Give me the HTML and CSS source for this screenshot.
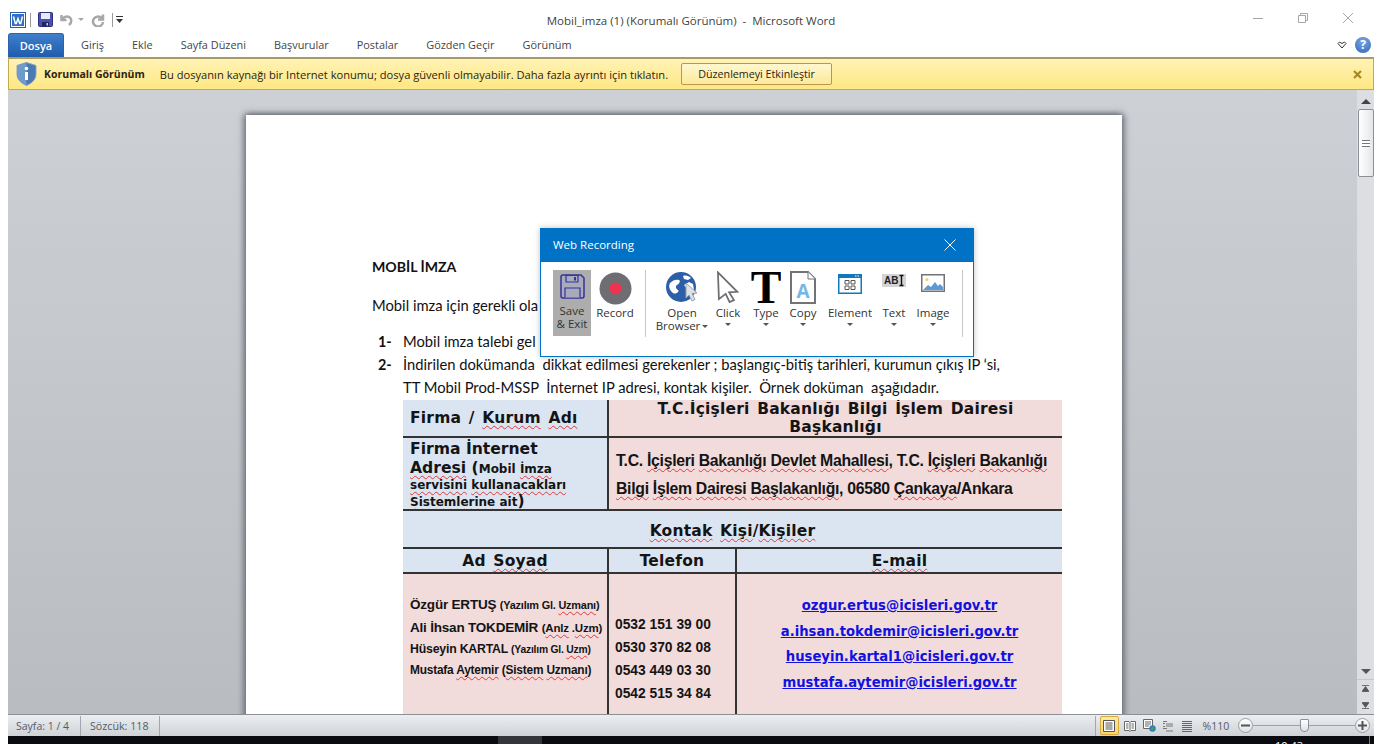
FILE: index.html
```html
<!DOCTYPE html>
<html lang="tr">
<head>
    <meta charset="utf-8">
    <title>Mobil_imza (1) (Korumalı Görünüm) - Microsoft Word</title>
    <link rel="stylesheet" href="styles.css">
</head>
<body>
    <div class="window">
        <div class="titlebar">
            <div class="qat">
                <svg class="qat-word" width="16" height="16" viewBox="0 0 16 16"><rect x="0.5" y="0.5" width="15" height="15" fill="#fff" stroke="#2a5ba8"/><rect x="2" y="2" width="12" height="12" fill="#2f6fc4"/><path d="M3.5 4.5l1.8 7h1l1.7-5 1.7 5h1l1.8-7" fill="none" stroke="#fff" stroke-width="1.5"/></svg>
                <span class="qat-sep"></span>
                <svg class="qat-save" width="15" height="15" viewBox="0 0 15 15"><rect x="0.5" y="0.5" width="14" height="14" rx="1" fill="#4b4fb0" stroke="#2e2f7c"/><rect x="3" y="1" width="9" height="6" fill="#e6ecf7"/><rect x="4" y="10" width="7" height="4.5" fill="#23245f"/><rect x="8.5" y="11" width="1.5" height="2.5" fill="#c9cde8"/></svg>
                <svg class="qat-undo" width="14" height="14" viewBox="0 0 14 14"><path d="M1.5 2v5h5M2 6.5C4 4 6.500 3 9 4c3 1.500 3 5.500 0 8" fill="none" stroke="#a6a8ab" stroke-width="2.500"/></svg>
                <span class="qat-caret"></span>
                <svg class="qat-redo" width="14" height="14" viewBox="0 0 14 14"><path d="M12 1.500v5H7M11 5.500A5 5 0 1 0 12 9" fill="none" stroke="#a6a8ab" stroke-width="2.500"/></svg>
                <span class="qat-sep qat-sep-last"></span>
                <svg class="qat-more" width="8" height="8" viewBox="0 0 8 8"><rect x="0" y="0" width="7" height="1" fill="#333"/><path d="M0 3h7L3.500 7z" fill="#333"/></svg>
            </div>
            <div class="title">Mobil_imza (1) (Korumalı Görünüm)&nbsp; -&nbsp; Microsoft Word</div>
            <div class="winctrl">
                <svg width="10" height="10" viewBox="0 0 10 10"><path d="M0 5.500h10" stroke="#a5a5a5"/></svg>
                <svg width="10" height="10" viewBox="0 0 10 10"><path d="M2.500 2.500V.5h7v7h-2M.5 2.500h7v7h-7z" fill="none" stroke="#a5a5a5"/></svg>
                <svg width="10" height="10" viewBox="0 0 10 10"><path d="M0 0l10 10M10 0L0 10" stroke="#a5a5a5"/></svg>
            </div>
        </div>

        <div class="tabs">
            <div class="tab-file">Dosya</div>
            <div class="tab-list">
                <span>Giriş</span>
                <span>Ekle</span>
                <span>Sayfa Düzeni</span>
                <span>Başvurular</span>
                <span>Postalar</span>
                <span>Gözden Geçir</span>
                <span>Görünüm</span>
            </div>
            <div class="tab-tools">
                <svg width="10" height="8" viewBox="0 0 10 8"><path d="M1 2.500L2.500 1 5 2.500 7.500 1 9 2.500 5 7z" fill="#fff" stroke="#333"/></svg>
                <span class="help">?</span>
            </div>
        </div>

        <div class="msgbar">
            <svg class="shield" width="21" height="24" viewBox="0 0 21 24"><path d="M10.500 0.500L20 3.500V12c0 5.500-4 9-9.500 11.500C5 21 1 17.500 1 12V3.500z" fill="#4a79b4" stroke="#86a2c4"/><path d="M10.500 0.500V23.500C5 21 1 17.500 1 12V3.500z" fill="#6f9bcc"/><circle cx="10.500" cy="6.500" r="1.800" fill="#fff"/><rect x="9" y="10" width="3" height="8" fill="#fff"/></svg>
            <strong class="msg-head">Korumalı Görünüm</strong>
            <span class="msg-text">Bu dosyanın kaynağı bir Internet konumu; dosya güvenli olmayabilir. Daha fazla ayrıntı için tıklatın.</span>
            <button class="msg-btn">Düzenlemeyi Etkinleştir</button>
            <svg class="msg-close" width="9" height="9" viewBox="0 0 9 9"><path d="M1 1l7 7M8 1L1 8" stroke="#a58a24" stroke-width="2.200"/></svg>
        </div>

        <div class="workspace">
            <div class="docpane">
                <div class="page">
                    <p class="doc-title">MOBİL İMZA</p>
                    <p class="doc-intro">Mobil imza için gerekli ola</p>
                    <ol class="doc-list">
                        <li><b>1-</b><span>Mobil imza talebi gel</span></li>
                        <li><b>2-</b><span>İndirilen dokümanda&nbsp; dikkat edilmesi gerekenler ; başlangıç-bitiş tarihleri, kurumun çıkış IP ‘si,</span></li>
                        <li><b></b><span>TT Mobil Prod-MSSP&nbsp; İnternet IP adresi, kontak kişiler.&nbsp; Örnek doküman&nbsp; aşağıdadır.</span></li>
                    </ol>
                    <table class="form">
                        <colgroup><col class="col-a"><col class="col-b"><col class="col-c"></colgroup>
                        <tr class="row-1">
                            <td class="blue head-left">Firma / <u>Kurum</u> <u>Adı</u></td>
                            <td class="pink head-center" colspan="2">T.C.İçişleri Bakanlığı Bilgi İşlem Dairesi<br>Başkanlığı</td>
                        </tr>
                        <tr class="row-2">
                            <td class="blue firm">
                                <div class="firm-big">Firma İnternet</div>
                                <div class="firm-big"><u>Adresi</u> (<small class="firm-small">Mobil <u>İmza</u></small></div>
                                <div class="firm-small"><u>servisini</u> <u>kullanacakları</u></div>
                                <div class="firm-small"><u>Sistemlerine</u> <u>ait</u><span class="firm-paren">)</span></div>
                            </td>
                            <td class="pink address" colspan="2">
                                <div>T.C. <u>İçişleri</u> <u>Bakanlığı</u> <u>Devlet</u> <u>Mahallesi</u>, T.C. <u>İçişleri</u> <u>Bakanlığı</u></div>
                                <div><u>Bilgi</u> <u>İşlem</u> <u>Dairesi</u> <u>Başlakanlığı</u>, 06580 <u>Çankaya</u>/Ankara</div>
                            </td>
                        </tr>
                        <tr class="row-3">
                            <td class="blue head-center" colspan="3"><u>Kontak</u> <u>Kişi</u>/<u>Kişiler</u></td>
                        </tr>
                        <tr class="row-4">
                            <td class="blue head-center">Ad <u>Soyad</u></td>
                            <td class="blue head-center">Telefon</td>
                            <td class="blue head-center"><u>E-mail</u></td>
                        </tr>
                        <tr class="row-5">
                            <td class="pink people">
                                <div class="p1">Özgür ERTUŞ <small>(Yazılım Gl. <u>Uzmanı</u>)</small></div>
                                <div class="p2">Ali İhsan TOKDEMİR <small>(<u>Anlz</u> .<u>Uzm</u>)</small></div>
                                <div class="p3">Hüseyin KARTAL <small>(Yazılım Gl. <u>Uzm</u>)</small></div>
                                <div class="p4">Mustafa <u>Aytemir</u> (<u>Sistem</u> <u>Uzmanı</u>)</div>
                            </td>
                            <td class="pink phones">
                                <div>0532 151 39 00</div>
                                <div>0530 370 82 08</div>
                                <div>0543 449 03 30</div>
                                <div>0542 515 34 84</div>
                            </td>
                            <td class="pink mails">
                                <div><a>ozgur.ertus@icisleri.gov.tr</a></div>
                                <div><a>a.ihsan.tokdemir@icisleri.gov.tr</a></div>
                                <div><a>huseyin.kartal1@icisleri.gov.tr</a></div>
                                <div><a>mustafa.aytemir@icisleri.gov.tr</a></div>
                            </td>
                        </tr>
                    </table>
                </div>
            </div>
            <div class="scroll">
                <div class="sb-arrow sb-up"></div>
                <div class="sb-thumb"><span></span></div>
                <div class="sb-track"></div>
                <div class="sb-arrow sb-down"></div>
                <div class="sb-nav">
                    <svg width="7" height="7" viewBox="0 0 7 7"><path d="M0 .5h7M3.500 1.500L7 6.500H0z" stroke="#555" stroke-width=".8" fill="#555"/></svg>
                </div>
                <div class="sb-nav sb-nav-last">
                    <svg width="7" height="7" viewBox="0 0 7 7"><path d="M0 6.500h7M3.500 5.500L7 .5H0z" stroke="#555" stroke-width=".8" fill="#555"/></svg>
                </div>
            </div>
        </div>

        <div class="statusbar">
            <span class="st-cell st-page">Sayfa: 1 / 4</span>
            <span class="st-cell st-words">Sözcük: 118</span>
            <div class="st-right">
                <div class="view view-on">
                    <svg width="12" height="12" viewBox="0 0 12 12"><path d="M.5.5h11v11H.5zM2.500 3h7M2.500 5h7M2.500 7h7M2.500 9h7" fill="#fff" stroke="#555"/></svg>
                </div>
                <div class="view">
                    <svg width="12" height="12" viewBox="0 0 12 12"><path d="M.5 1.500h4.500l1 1 1-1h4.500v9H7l-1 1-1-1H.5zM6 2.500v8M2 4h2.500M2 6h2.500M2 8h2.500M7.500 4H10M7.500 6H10M7.500 8H10" fill="#fff" stroke="#666"/></svg>
                </div>
                <div class="view">
                    <svg width="13" height="13" viewBox="0 0 13 13"><path d="M.5.5h9v9h-9zM2 3h6M2 5h6M2 7h4" fill="#fff" stroke="#666"/><circle cx="9.500" cy="9.500" r="3.200" fill="#2f7fb8"/><path d="M8 9.500l2-2 1 2-2 2z" fill="#5aa052"/></svg>
                </div>
                <div class="view">
                    <svg width="12" height="12" viewBox="0 0 12 12"><path d="M1 1.500h4M4 4h7M4 6h7M1 8.500h4M4 11h7M1 3.500h2M1 6.500h2" fill="none" stroke="#777"/></svg>
                </div>
                <div class="view">
                    <svg width="12" height="12" viewBox="0 0 12 12"><path d="M1 1.500h10M1 3.500h10M1 5.500h10M1 7.500h10M1 9.500h10M1 11.500h10" stroke="#666"/></svg>
                </div>
                <span class="zoom-val">%110</span>
                <span class="zoom-btn">
                    <svg width="9" height="9" viewBox="0 0 9 9"><path d="M0 4.500h9" stroke="#555" stroke-width="2"/></svg>
                </span>
                <div class="zoom-track"><span class="zoom-thumb"></span></div>
                <span class="zoom-btn">
                    <svg width="9" height="9" viewBox="0 0 9 9"><path d="M0 4.500h9M4.500 0v9" stroke="#555" stroke-width="2"/></svg>
                </span>
            </div>
        </div>

        <div class="taskbar">
            <span class="task-btn"></span>
            <span class="task-clock">10:43</span>
            <span class="task-line"></span>
        </div>
    </div>

    <div class="recorder">
        <div class="rec-head">
            <span>Web Recording</span>
            <svg width="12" height="12" viewBox="0 0 12 12"><path d="M.5.5l11 11M11.500.5l-11 11" stroke="#fff"/></svg>
        </div>
        <div class="rec-tools">
            <div class="tool tool-save">
                <svg width="25" height="25" viewBox="0 0 25 25"><path d="M1 3a2 2 0 0 1 2-2h18l3 3v18a2 2 0 0 1-2 2H3a2 2 0 0 1-2-2z" fill="#a9aabb" stroke="#34349a" stroke-width="1.500"/><path d="M6 1.500h12v6.500H6z" fill="#a9aabb" stroke="#34349a" stroke-width="1.200"/><path d="M14 3h2v3.500h-2z" fill="#34349a"/><path d="M5 23.500V14h15v9.500" fill="#a9aabb" stroke="#34349a" stroke-width="1.200"/></svg>
                <span>Save<br>&amp; Exit</span>
            </div>
            <div class="tool tool-record">
                <svg width="33" height="33" viewBox="0 0 33 33"><circle cx="16.500" cy="16.500" r="16" fill="#6d6d72"/><circle cx="16.500" cy="16.500" r="6" fill="#ee3350"/></svg>
                <span>Record</span>
            </div>
            <span class="rec-sep"></span>
            <div class="tool tool-browser">
                <svg width="34" height="33" viewBox="0 0 34 33"><circle cx="16" cy="16" r="15" fill="#2d5ea8"/><path d="M5 12c3-3 6-4 9-3 2 1 0 4-2 5s-1 4 1 5-2 5-5 3-5-7-3-10zM18 5c3-1 6 0 8 2l-3 2-4-1zM19 14l5-3 4 2 1 6-4 1-3-2z" fill="#fff"/><path d="M21 12l11 10-5 .5 3 6-3 1.500-3-6-3 3z" fill="#dfe3e8" stroke="#9aa0a8"/></svg>
                <span>Open<br>Browser<i class="caret caret-inline"></i></span>
            </div>
            <div class="tool tool-click">
                <svg width="24" height="33" viewBox="0 0 24 33"><path d="M2 2l20 20-8.500.5 5 8-4.500 2-4-8.500-7 5.500z" transform="translate(0 -.5) scale(.97)" fill="#fff" stroke="#6d6d72" stroke-width="1.800"/></svg>
                <span>Click</span>
                <i class="caret"></i>
            </div>
            <div class="tool tool-type">
                <svg width="30" height="33" viewBox="0 0 30 33"><text x="15" y="32" text-anchor="middle" class="type-t">T</text></svg>
                <span>Type</span>
                <i class="caret"></i>
            </div>
            <div class="tool tool-copy">
                <svg width="26" height="33" viewBox="0 0 26 33"><path d="M1 1h17l7 7v24H1z" fill="#fff" stroke="#737373" stroke-width="2"/><path d="M18 1v7h7" fill="#fff" stroke="#737373"/><text x="13" y="27" text-anchor="middle" class="copy-a">A</text></svg>
                <span>Copy</span>
                <i class="caret"></i>
            </div>
            <div class="tool tool-element">
                <svg width="24" height="33" viewBox="0 0 24 33"><rect x="0" y="3" width="24" height="20" fill="#1277bb"/><rect x="1.500" y="7" width="21" height="14.500" fill="#fff"/><path d="M17 5h1.500M19.500 5H21" stroke="#fff"/><path d="M7 9.500h4v3.500H7zM13 9.500h4v3.500h-4zM7 15h4v3.500H7zM13 15h4v3.500h-4z" fill="none" stroke="#555"/></svg>
                <span>Element</span>
                <i class="caret"></i>
            </div>
            <div class="tool tool-text">
                <svg width="24" height="33" viewBox="0 0 24 33"><rect x="0" y="3" width="24" height="13" fill="#d4d4d4"/><text x="2" y="13" class="abi">AB</text><path d="M17.500 4.500h4M17.500 14.500h4M19.500 4.500v10" stroke="#111" stroke-width="1.400"/></svg>
                <span>Text</span>
                <i class="caret"></i>
            </div>
            <div class="tool tool-image">
                <svg width="24" height="33" viewBox="0 0 24 33"><rect x=".75" y="3.750" width="22.500" height="16.500" fill="#fff" stroke="#737373" stroke-width="1.500"/><circle cx="6" cy="8.500" r="1.500" fill="#f0cf6a"/><path d="M2 19l5-5 3 2 4-5 3 4 2-2 3 3v3z" fill="#5b9bd5"/></svg>
                <span>Image</span>
                <i class="caret"></i>
            </div>
            <span class="rec-sep rec-sep-last"></span>
        </div>
    </div>
</body>
</html>
```
FILE: styles.css
```css
* {
    box-sizing: border-box;
}
html, body {
    height: 100%;
    margin: 0;
    overflow: hidden;
}
body {
    background-color: #fff;
    font-family: "Open Sans", "Noto Sans", sans-serif;
    color: #3b3b3b;
}
.window {
    display: flex;
    flex-direction: column;
    height: 744px;
    margin: 0 8px;
}

/* title bar */
.titlebar {
    display: flex;
    align-items: center;
    height: 32px;
    flex: none;
}
.qat {
    display: flex;
    align-items: center;
    width: 400px;
    padding: 7px 0 0 2px;
}
.qat-sep {
    width: 1px;
    height: 14px;
    margin: 0 7px 0 4px;
    background-color: #9a9a9a;
}
.qat-undo {
    margin-left: 7px;
}
.qat-caret {
    width: 0;
    height: 0;
    margin: 0 7px 0 4px;
    border-left: 3px solid transparent;
    border-right: 3px solid transparent;
    border-top: 3px solid #a6a8ab;
}
.qat-sep-last {
    margin: 0 3px 0 7px;
}
.title {
    width: 566px;
    padding-top: 8px;
    font-size: 11.5px;
    text-align: center;
    color: #3f3f3f;
}
.winctrl {
    display: flex;
    gap: 35px;
    margin-left: 279px;
    padding-top: 3px;
}

/* tabs */
.tabs {
    display: flex;
    align-items: center;
    height: 25px;
    flex: none;
    font-size: 10.900px;
    color: #444;
}
.tab-file {
    width: 56px;
    height: 24px;
    margin-top: 1px;
    border: 1px solid #2a62ad;
    border-bottom: none;
    border-radius: 3px 3px 0 0;
    background: linear-gradient(#3f7fcb, #1f5cae);
    color: #fff;
    font-size: 11px;
    font-weight: 600;
    line-height: 23px;
    text-align: center;
}
.tab-list {
    display: flex;
    gap: 28px;
    margin-left: 17px;
}
.tab-tools {
    display: flex;
    align-items: center;
    gap: 8px;
    margin-left: auto;
    margin-right: 3px;
}
.help {
    width: 16px;
    height: 16px;
    border-radius: 50%;
    background: radial-gradient(circle at 50% 30%, #7ca6e0, #2f66b8);
    color: #fff;
    font-size: 12px;
    font-weight: 700;
    line-height: 16px;
    text-align: center;
}

/* protected view bar */
.msgbar {
    display: flex;
    align-items: center;
    height: 33px;
    flex: none;
    border: 1px solid #c3ab4c;
    border-top: 2px solid #a89a66;
    background: linear-gradient(#fff3b5, #fee784);
    font-size: 11.130px;
    color: #2b2411;
}
.shield {
    margin-left: 7px;
}
.msg-head {
    margin-left: 7px;
    font-size: 10.500px;
    font-weight: 700;
}
.msg-text {
    margin-left: 15px;
}
.msg-btn {
    width: 151px;
    height: 22px;
    margin-left: 13px;
    padding: 0;
    border: 1px solid #b49a4a;
    border-radius: 2px;
    background: linear-gradient(#fff7d0, #fde99a);
    font-family: inherit;
    font-size: 10.700px;
    color: #2b2411;
}
.msg-close {
    margin-left: auto;
    margin-right: 11px;
}

/* document area */
.workspace {
    display: flex;
    flex: 1;
    min-height: 0;
    background: linear-gradient(#cdd0d5, #b9bcc0);
}
.docpane {
    flex: 1;
    min-width: 0;
    overflow: hidden;
    padding: 25px 0 0 238px;
}
.page {
    width: 876px;
    height: 900px;
    padding: 143px 60px 0 126px;
    background-color: #fff;
    box-shadow: 0 -2px 5px rgba(90, 95, 105, 0.55), 3px 0 6px rgba(90, 95, 105, 0.6), -3px 0 6px rgba(90, 95, 105, 0.6);
    font-family: "Lato", "Open Sans", sans-serif;
    font-size: 14.750px;
    color: #111;
}
.doc-title {
    margin: 0;
    font-size: 14.100px;
    font-weight: 700;
    line-height: 18px;
}
.doc-intro {
    margin: 20px 0 0;
    line-height: 18px;
}
.doc-list {
    margin: 16px 0 1px;
    padding: 0;
    list-style: none;
}
.doc-list li {
    display: flex;
    height: 23px;
    line-height: 23px;
}
.doc-list b {
    width: 31px;
    padding-left: 6px;
    font-size: 14.400px;
}
.form {
    width: 659px;
    margin: 0 0 0 31px;
    border-collapse: collapse;
    table-layout: fixed;
    font-family: "DejaVu Sans", sans-serif;
    font-weight: 700;
    color: #141414;
}
.form u {
    text-decoration: underline wavy #e0393e 1px;
    text-underline-offset: 2px;
    text-decoration-skip-ink: none;
}
.col-a {
    width: 205px;
}
.col-b {
    width: 128px;
}
.col-c {
    width: 326px;
}
.form td {
    padding: 0;
    border-top: 2px solid #333;
    border-left: 2px solid #333;
    overflow: hidden;
}
.form td:first-child {
    border-left: none;
}
.row-1 td {
    border-top: none;
}
.blue {
    background-color: #dbe5f1;
}
.pink {
    background-color: #f2dbdb;
}
.row-1 {
    height: 37px;
}
.row-2 {
    height: 73px;
}
.row-3 {
    height: 38px;
}
.row-3 td {
    padding-top: 3px;
}
.row-4 {
    height: 25px;
}
.row-4 td {
    padding-top: 1px;
}
.row-5 {
    height: 141px;
}
.head-left {
    padding-left: 7px !important;
    font-size: 15.500px;
    letter-spacing: 0.200px;
    word-spacing: 2px;
}
.head-center {
    font-size: 15.500px;
    letter-spacing: 0.200px;
    word-spacing: 2px;
    line-height: 18px;
    text-align: center;
}
.firm {
    padding: 2px 0 0 7px !important;
    vertical-align: top;
}
.firm-big {
    height: 19px;
    font-size: 15.600px;
    line-height: 19px;
}
.firm-small {
    height: 15.500px;
    font-size: 12px;
    line-height: 15.500px;
    font-weight: 700;
}
.firm-big .firm-small {
    height: auto;
}
.firm-paren {
    font-size: 15.600px;
    line-height: 14px;
}
.address {
    padding: 2px 0 0 7px !important;
    font-family: "Liberation Sans", sans-serif;
    font-size: 15.800px;
    letter-spacing: -0.300px;
    line-height: 28px;
}
.people {
    padding-left: 7px !important;
    padding-top: 20px !important;
    vertical-align: top;
    font-family: "Liberation Sans", sans-serif;
    letter-spacing: -0.200px;
}
.people div {
    height: 21px;
    line-height: 22px;
}
.p1, .p2 {
    font-size: 13.500px;
}
.p1 {
    height: 23px !important;
}
.p1 small {
    font-size: 10.900px;
}
.p2 small {
    font-size: 11.500px;
}
.p3 {
    font-size: 12.300px;
}
.p3 small {
    font-size: 10.300px;
}
.p4 {
    font-size: 11.900px;
}
.phones {
    padding: 39px 0 0 6px !important;
    vertical-align: top;
    font-family: "Liberation Sans", sans-serif;
    font-size: 13.800px;
}
.phones div {
    height: 23px;
    line-height: 23px;
}
.mails {
    padding-top: 19px !important;
    vertical-align: top;
    font-size: 13.200px;
    text-align: center;
}
.mails div {
    height: 25.500px;
    line-height: 25.500px;
}
.mails a {
    color: #1212e0;
    text-decoration: underline;
}

/* scrollbar */
.scroll {
    display: flex;
    flex-direction: column;
    align-items: center;
    width: 17px;
    flex: none;
    background-color: #dcdee2;
}
.sb-arrow {
    width: 0;
    height: 0;
    flex: none;
    border-left: 5px solid transparent;
    border-right: 5px solid transparent;
}
.sb-up {
    margin: 9px 0 5px;
    border-bottom: 5px solid #444;
}
.sb-down {
    margin: 0 0 5px;
    border-top: 5px solid #555;
}
.sb-thumb {
    display: flex;
    align-items: center;
    justify-content: center;
    width: 16px;
    height: 68px;
    flex: none;
    border: 1px solid #8c9096;
    border-radius: 2px;
    background: linear-gradient(90deg, #fff, #e4e6ea);
}
.sb-thumb span {
    width: 8px;
    height: 7px;
    border-top: 1px solid #777;
    border-bottom: 1px solid #777;
    background: linear-gradient(#fff 2px, #777 2px, #777 3px, #fff 3px);
}
.sb-track {
    flex: 1;
}
.sb-nav {
    display: flex;
    align-items: center;
    justify-content: center;
    width: 17px;
    height: 17px;
    flex: none;
    border-top: 1px solid #c6c8cc;
}
.sb-nav-last {
    border-top: none;
    height: 18px;
}

/* status bar */
.statusbar {
    display: flex;
    align-items: center;
    height: 22px;
    flex: none;
    border-top: 1px solid #8d9196;
    background: linear-gradient(#eceef1, #cfd2d6);
    font-size: 10.500px;
    color: #555b66;
}
.st-cell {
    display: flex;
    align-items: center;
    height: 20px;
    border-right: 1px solid #a3a6ab;
}
.st-page {
    width: 73px;
    padding-left: 8px;
}
.st-words {
    width: 79px;
    padding-left: 9px;
    font-size: 10.700px;
}
.st-right {
    display: flex;
    align-items: center;
    height: 20px;
    margin-left: auto;
    padding: 0 4px;
    border-left: 1px solid #a3a6ab;
}
.view {
    display: flex;
    align-items: center;
    justify-content: center;
    width: 19px;
    height: 19px;
}
.view-on {
    margin-right: 2px;
    border: 1px solid #d8a93c;
    border-radius: 2px;
    background: linear-gradient(#fdeaa4, #fbd56d);
}
.zoom-val {
    width: 35.500px;
    margin-left: 6px;
    font-size: 10.500px;
}
.zoom-btn {
    display: flex;
    align-items: center;
    justify-content: center;
    width: 15px;
    height: 15px;
    flex: none;
    border: 1px solid #9b9fa6;
    border-radius: 50%;
    background: linear-gradient(#fff, #dfe1e5);
}
.zoom-track {
    position: relative;
    width: 102px;
    height: 1px;
    background-color: #9ea2a8;
}
.zoom-thumb {
    position: absolute;
    left: 47px;
    top: -6px;
    width: 9px;
    height: 13px;
    border: 1px solid #8d9196;
    border-radius: 1px 1px 4px 4px;
    background: linear-gradient(#fff, #dfe1e5);
}

/* bottom strip */
.taskbar {
    position: relative;
    height: 8px;
    flex: none;
    overflow: hidden;
    background-color: #090b10;
}
.task-btn {
    position: absolute;
    left: 490px;
    top: 0;
    width: 44px;
    height: 8px;
    background-color: #33353a;
}
.task-clock {
    position: absolute;
    left: 1267px;
    top: 3px;
    font-size: 11px;
    line-height: 14px;
    color: #fff;
}
.task-line {
    position: absolute;
    left: 1361px;
    top: 0;
    width: 1px;
    height: 8px;
    background-color: #777;
}

/* recorder toolbar, floats over the document */
.recorder {
    position: absolute;
    left: 540px;
    top: 228px;
    width: 434px;
    height: 129px;
    border: 1px solid #0072c6;
    background-color: #fff;
    box-shadow: 0 0 6px rgba(0, 0, 0, 0.25);
}
.rec-head {
    display: flex;
    align-items: center;
    justify-content: space-between;
    height: 33px;
    padding: 0 17px 2px 12px;
    background-color: #0072c6;
    font-size: 11.500px;
    color: #fff;
}
.rec-tools {
    display: flex;
    padding: 8px 0 0 12px;
    font-size: 11.500px;
    color: #333;
}
.tool {
    display: flex;
    flex-direction: column;
    align-items: center;
    height: 66px;
    flex: none;
    line-height: 13px;
    text-align: center;
}
.tool svg {
    flex: none;
}
.tool span {
    margin-top: 1.500px;
}
.caret {
    width: 0;
    height: 0;
    margin-top: 4px;
    border-left: 3px solid transparent;
    border-right: 3px solid transparent;
    border-top: 3px solid #555;
}
.caret-inline {
    display: inline-block;
    margin: 0 0 2px 2px;
}
.rec-sep {
    width: 1px;
    height: 67px;
    flex: none;
    background-color: #c9c9c9;
}
.tool-save {
    width: 38px;
    padding-top: 4px;
    background-color: #adadad;
}
.tool-save span {
    margin-top: 5px;
}
.tool-record {
    width: 46px;
    margin-left: 1px;
    padding-top: 2px;
}
.tool-record span {
    margin-top: 0.500px;
}
.rec-tools .rec-sep {
    margin-left: 7px;
}
.tool-browser {
    width: 54px;
    margin-left: 9px;
    padding-top: 1px;
    white-space: nowrap;
}
.tool-click {
    width: 30px;
    margin-left: 4px;
    padding-top: 1px;
}
.tool-type {
    width: 30px;
    margin-left: 8px;
    padding-top: 1px;
}
.type-t {
    font-family: "Liberation Serif", serif;
    font-size: 46px;
    font-weight: 700;
    fill: #000;
}
.tool-copy {
    width: 30px;
    margin-left: 7px;
    padding-top: 1px;
}
.copy-a {
    font-family: "Open Sans", sans-serif;
    font-size: 19px;
    font-weight: 700;
    fill: #74b8e6;
}
.tool-element {
    width: 46px;
    margin-left: 9px;
    padding-top: 1px;
}
.tool-text {
    width: 26px;
    margin-left: 8px;
    padding-top: 1px;
}
.abi {
    font-family: "Liberation Sans", sans-serif;
    font-size: 10px;
    font-weight: 700;
    fill: #222;
}
.tool-image {
    width: 32px;
    margin-left: 10px;
    padding-top: 1px;
}
.rec-tools .rec-sep-last {
    margin-left: 13px;
}
```
